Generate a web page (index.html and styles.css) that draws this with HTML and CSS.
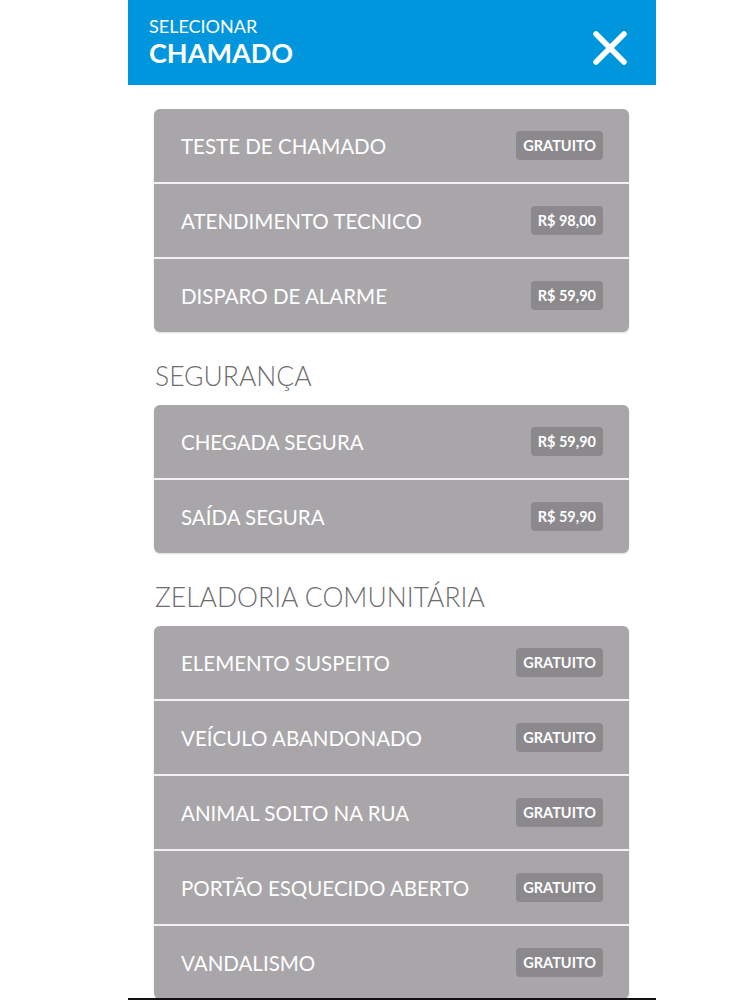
FILE: index.html
```html
<!DOCTYPE html>
<html lang="pt-BR">
<head>
<meta charset="utf-8">
<link rel="stylesheet" href="styles.css">
</head>
<body>
<div class="screen">
  <header class="topbar">
    <div class="titles">
      <div class="subtitle">SELECIONAR</div>
      <div class="title">CHAMADO</div>
    </div>
    <svg class="close" width="36" height="36" viewBox="0 0 36 36" aria-hidden="true">
      <path d="M4 4 L32 32 M32 4 L4 32" stroke="#fff" stroke-width="5.5" stroke-linecap="round" fill="none"/>
    </svg>
  </header>
  <main class="content">
    <ul class="card">
      <li class="row"><span class="label">TESTE DE CHAMADO</span><span class="badge">GRATUITO</span></li>
      <li class="row"><span class="label">ATENDIMENTO TECNICO</span><span class="badge">R$ 98,00</span></li>
      <li class="row"><span class="label">DISPARO DE ALARME</span><span class="badge">R$ 59,90</span></li>
    </ul>
    <h2 class="section">SEGURANÇA</h2>
    <ul class="card">
      <li class="row"><span class="label">CHEGADA SEGURA</span><span class="badge">R$ 59,90</span></li>
      <li class="row"><span class="label">SAÍDA SEGURA</span><span class="badge">R$ 59,90</span></li>
    </ul>
    <h2 class="section">ZELADORIA COMUNITÁRIA</h2>
    <ul class="card">
      <li class="row"><span class="label">ELEMENTO SUSPEITO</span><span class="badge">GRATUITO</span></li>
      <li class="row"><span class="label">VEÍCULO ABANDONADO</span><span class="badge">GRATUITO</span></li>
      <li class="row"><span class="label">ANIMAL SOLTO NA RUA</span><span class="badge">GRATUITO</span></li>
      <li class="row"><span class="label">PORTÃO ESQUECIDO ABERTO</span><span class="badge">GRATUITO</span></li>
      <li class="row"><span class="label">VANDALISMO</span><span class="badge">GRATUITO</span></li>
    </ul>
  </main>
</div>
</body>
</html>
```

FILE: styles.css
```css
html, body {
  margin: 0;
  padding: 0;
  background: #fff;
  font-family: Lato, "Open Sans", "Liberation Sans", sans-serif;
}

.screen {
  width: 528px;
  margin-left: 128px;
  height: 998px;
  border-bottom: 2px solid #111;
  overflow: hidden;
  background: #fff;
}

.topbar {
  height: 85px;
  background: #0096de;
  display: flex;
  align-items: center;
  justify-content: space-between;
  padding: 0 28px 0 21px;
  box-sizing: border-box;
  color: #fff;
}

.titles {
  display: flex;
  flex-direction: column;
  gap: 4px;
  margin-top: -2px;
}

.subtitle {
  font-size: 18px;
  font-weight: 400;
  line-height: 18px;
}

.title {
  font-size: 27px;
  font-weight: 700;
  line-height: 27px;
}

.close {
  display: block;
  margin-top: 10px;
}

.content {
  padding: 24px 27px 0 26px;
}

.card {
  list-style: none;
  margin: 0;
  padding: 0;
  background: #a8a6a9;
  border-radius: 6px;
  overflow: hidden;
  box-shadow: 0 1px 2px rgba(0,0,0,0.15);
}

.row {
  height: 73px;
  display: flex;
  align-items: center;
  justify-content: space-between;
  padding: 0 26px 0 27px;
  border-top: 2px solid #f2f2f2;
}

.row:first-child {
  border-top: 0;
}

.label {
  color: #fff;
  font-size: 20.5px;
  font-weight: 400;
}

.badge {
  background: #8b898c;
  color: #fff;
  font-size: 14.5px;
  font-weight: 700;
  line-height: 29px;
  padding: 0 7px;
  border-radius: 4px;
}

.section {
  margin: 24px 0 9px 1px;
  font-size: 26.5px;
  font-weight: 300;
  line-height: 40px;
  color: #6e6d70;
}
```
